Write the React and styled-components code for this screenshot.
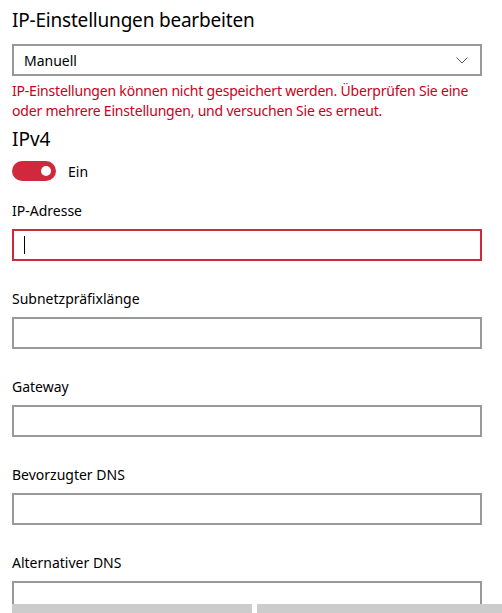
import React from "react";
import styled, { createGlobalStyle } from "styled-components";

const GlobalStyle = createGlobalStyle`
  html, body {
    margin: 0;
    padding: 0;
    background: #fff;
    overflow: hidden;
  }
  body {
    font-family: "Noto Sans", "Open Sans", sans-serif;
    color: #000;
  }
`;

// the button bar sits below the scroll area and is cut off by the window
const Page = styled.div`
  height: 636px;
  display: flex;
  flex-direction: column;
  overflow: hidden;
`;

const Content = styled.div`
  flex: 1;
  overflow: hidden;
  padding: 0 20px 0 12px;
`;

const Title = styled.h1`
  margin: 0;
  padding-top: 6px;
  font-size: 19px;
  font-weight: 400;
  line-height: 28px;
  letter-spacing: -0.2px;
`;

const Select = styled.div`
  box-sizing: border-box;
  margin-top: 10px;
  height: 32px;
  border: 2px solid #999;
  display: flex;
  align-items: center;
  justify-content: space-between;
  padding: 0 12px 0 10px;
  font-size: 14px;
`;

const ErrorText = styled.p`
  margin: 5px 0 0;
  color: #c9001c;
  font-size: 14px;
  line-height: 20px;
  letter-spacing: -0.2px;
  white-space: nowrap;
`;

const Section = styled.h2`
  margin: 4px 0 0;
  font-size: 19px;
  font-weight: 400;
  line-height: 28px;
`;

const ToggleRow = styled.div`
  margin-top: 8px;
  display: flex;
  align-items: center;
  gap: 12px;
  font-size: 14px;
`;

const Track = styled.div`
  box-sizing: border-box;
  width: 44px;
  height: 20px;
  border-radius: 10px;
  background: #d0283c;
  display: flex;
  align-items: center;
  justify-content: flex-end;
  padding-right: 5px;
`;

const Knob = styled.div`
  width: 10px;
  height: 10px;
  border-radius: 50%;
  background: #fff;
`;

const Field = styled.div`
  margin-top: ${(p) => (p.$first ? "20px" : "28px")};
`;

const Label = styled.div`
  font-size: 14px;
  line-height: 20px;
`;

const Input = styled.div`
  box-sizing: border-box;
  margin-top: 8px;
  height: 32px;
  border: 2px solid ${(p) => (p.$error ? "#d0283c" : "#999")};
  display: flex;
  align-items: center;
  padding-left: 10px;
`;

const Caret = styled.div`
  width: 1px;
  height: 18px;
  background: #000;
`;

const Footer = styled.div`
  flex-shrink: 0;
  display: flex;
  gap: 5px;
  padding-left: 12px;
  height: 32px;
`;

const Button = styled.div`
  background: #ccc;
  ${(p) => (p.$grow ? "flex: 1;" : "width: 240px;")}
`;

const fields = [
  "IP-Adresse",
  "Subnetzpräfixlänge",
  "Gateway",
  "Bevorzugter DNS",
  "Alternativer DNS",
];

export default function App() {
  return (
    <Page>
      <GlobalStyle />
      <Content>
        <Title>IP-Einstellungen bearbeiten</Title>
        <Select>
          <span>Manuell</span>
          <svg width="12" height="7" viewBox="0 0 12 7">
            <path d="M0.5 0.5 L6 6 L11.5 0.5" fill="none" stroke="#555" strokeWidth="1" />
          </svg>
        </Select>
        <ErrorText>
          IP-Einstellungen können nicht gespeichert werden. Überprüfen Sie eine
          <br />
          oder mehrere Einstellungen, und versuchen Sie es erneut.
        </ErrorText>
        <Section>IPv4</Section>
        <ToggleRow>
          <Track>
            <Knob />
          </Track>
          <span>Ein</span>
        </ToggleRow>
        {fields.map((f, i) => (
          <Field key={f} $first={i === 0}>
            <Label>{f}</Label>
            <Input $error={i === 0}>{i === 0 && <Caret />}</Input>
          </Field>
        ))}
      </Content>
      <Footer>
        <Button />
        <Button $grow />
      </Footer>
    </Page>
  );
}
